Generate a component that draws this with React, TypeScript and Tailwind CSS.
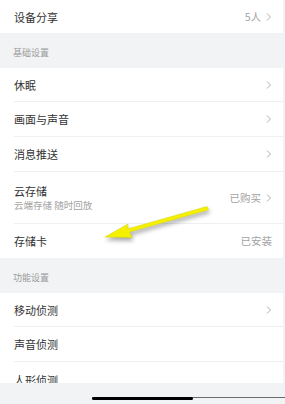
import React from 'react';

const Chevron = () => (
  <svg width="6" height="10" viewBox="0 0 6 10" className="ml-[5px] shrink-0">
    <polyline points="1,1.5 4.5,5 1,8.5" fill="none" stroke="#b0b0b0" strokeWidth="1" />
  </svg>
);

interface RowProps {
  title: string;
  subtitle?: string;
  value?: string;
  arrow?: boolean;
  divider?: boolean;
  h: string;
}

const Row: React.FC<RowProps> = ({ title, subtitle, value, arrow = true, divider = true, h }) => (
  <div className="bg-white pl-[14px]">
    <div className={`flex items-center justify-between pr-[11px] ${h} ${divider ? 'border-b border-[#efefef]' : ''}`}>
      <div className="flex flex-col">
        <span className="text-[11px] leading-[14px] text-[#333333]">{title}</span>
        {subtitle && <span className="text-[9.5px] leading-[12px] text-[#a3a3a3] mt-px">{subtitle}</span>}
      </div>
      <div className="flex items-center">
        {value && <span className="text-[10.5px] text-[#a3a3a3]">{value}</span>}
        {arrow && <Chevron />}
      </div>
    </div>
  </div>
);

const Header = ({ label }: { label: string }) => (
  <div className="h-[35px] pl-[13px] pt-[14px] text-[9px] leading-[12px] text-[#9a9a9a]">{label}</div>
);

export default function App() {
  return (
    <div
      className="relative w-[285px] h-[404px] overflow-hidden bg-[#f2f3f5] flex flex-col"
      style={{ fontFamily: '"Noto Sans CJK SC", "Noto Sans", sans-serif' }}
    >
      <div className="flex-1 overflow-hidden pr-[2px]">
        <Row title="设备分享" value="5人" divider={false} h="h-[33px]" />
        <Header label="基础设置" />
        <Row title="休眠" h="h-[34px]" />
        <Row title="画面与声音" h="h-[35px]" />
        <Row title="消息推送" h="h-[35px]" />
        <Row title="云存储" subtitle="云端存储 随时回放" value="已购买" h="h-[52px]" />
        <Row title="存储卡" value="已安装" arrow={false} divider={false} h="h-[34px]" />
        <Header label="功能设置" />
        <Row title="移动侦测" h="h-[34px]" />
        <Row title="声音侦测" arrow={false} h="h-[35px]" />
        <Row title="人形侦测" arrow={false} divider={false} h="h-[35px]" />
      </div>
      <div className="h-[21px] shrink-0 relative">
        <div className="absolute left-[92px] right-0 top-[14px] h-px bg-[#6b6b6b]" />
        <div className="absolute left-[92px] w-[101px] top-[14px] h-[3px] rounded-full bg-black" />
      </div>

      <svg
        className="absolute left-0 top-0 pointer-events-none drop-shadow-[1px_3px_2px_rgba(0,0,0,0.35)]"
        width="285"
        height="404"
      >
        <polygon
          points="105,237 128,224 127.5,229 207,206.5 208.5,209.8 129.5,232 132,237.5"
          fill="#f5f000"
          stroke="#d8d400"
          strokeWidth="0.5"
        />
      </svg>
    </div>
  );
}
